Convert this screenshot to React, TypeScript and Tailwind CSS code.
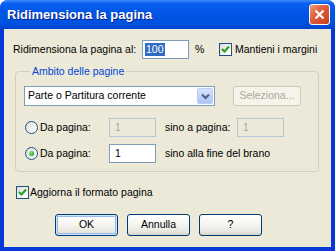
import React from "react";

const font = { fontFamily: '"Liberation Sans", Arial, sans-serif' };

function Check() {
  return (
    <span className="flex h-[13px] w-[13px] shrink-0 items-center justify-center border border-[#1C5180] bg-[linear-gradient(135deg,#DCDCD7_0%,#F4F4F0_60%,#FFFFFF_100%)]">
      <svg width="9" height="9" viewBox="0 0 9 9">
        <path d="M1 4 L3.5 6.5 L8 1.5" stroke="#21A121" strokeWidth="2" fill="none" />
      </svg>
    </span>
  );
}

function Radio({ on }: { on?: boolean }) {
  return (
    <span className="flex h-[13px] w-[13px] shrink-0 items-center justify-center rounded-full border border-[#1C5180] bg-[linear-gradient(135deg,#DCDCD7_0%,#F4F4F0_60%,#FFFFFF_100%)]">
      {on && <span className="h-[5px] w-[5px] rounded-full bg-[radial-gradient(circle_at_35%_35%,#8CE88A_0%,#21A121_80%)]" />}
    </span>
  );
}

function Btn({ label, def }: { label: string; def?: boolean }) {
  return (
    <div
      className={
        "flex h-[22px] w-[63px] items-center justify-center rounded-[3px] border border-[#003C74] bg-[linear-gradient(180deg,#FFFFFF_0%,#F4F4F0_50%,#E6E5DE_85%,#D6D0C5_100%)] text-black " +
        (def ? "shadow-[inset_0_0_0_1px_#CEE7FF,inset_0_0_0_2px_#98B8EA]" : "")
      }
    >
      {label}
    </div>
  );
}

export default function App() {
  return (
    <div style={font} className="flex h-[251px] w-[335px] flex-col overflow-hidden whitespace-nowrap rounded-t-[8px] bg-[#0838D7]">
      {/* title bar */}
      <div className="flex h-[29px] shrink-0 items-center justify-between bg-[linear-gradient(180deg,#3D8DF7_0%,#0A5FF0_12%,#0055E5_45%,#0052E0_80%,#0043CF_100%)] pl-[7px] pr-[5px]">
        <span className="text-[13px] font-bold text-white [text-shadow:1px_1px_0_#0A1E8C]">Ridimensiona la pagina</span>
        <div className="flex h-[21px] w-[21px] items-center justify-center rounded-[3px] border border-white bg-[linear-gradient(135deg,#F09878_0%,#E0603F_40%,#C7401F_100%)]">
          <svg width="11" height="11" viewBox="0 0 11 11">
            <path d="M1.5 1.5 L9.5 9.5 M9.5 1.5 L1.5 9.5" stroke="white" strokeWidth="2.2" />
          </svg>
        </div>
      </div>
      {/* body */}
      <div className="mx-[4px] mb-[4px] flex flex-1 flex-col bg-[#ECE9D8] pl-[9px] text-[10.5px] text-black">
        {/* row 1 */}
        <div className="mt-[11px] flex h-[19px] items-center">
          <span className="w-[129px] shrink-0">Ridimensiona la pagina al:</span>
          <div className="flex h-[19px] w-[47px] shrink-0 items-center border border-[#7F9DB9] bg-white pl-[2px]">
            <span className="bg-[#316AC5] px-[1px] leading-[13px] text-white">100</span>
          </div>
          <span className="w-[30px] shrink-0 pl-[6px]">%</span>
          <Check />
          <span className="ml-[3px]">Mantieni i margini</span>
        </div>
        {/* group */}
        <fieldset className="ml-[2px] mt-[6px] w-[304px] rounded-[4px] border border-[#D0D0BF] pb-[8px] pl-[8px]">
          <legend className="ml-[6px] px-[2px] leading-[13px] text-[#0046D5]">Ambito delle pagine</legend>
          <div className="mt-[8px] flex items-center">
            <div className="flex h-[20px] w-[191px] items-center justify-between border border-[#7F9DB9] bg-white pl-[3px] pr-[1px]">
              <span>Parte o Partitura corrente</span>
              <div className="flex h-[16px] w-[16px] items-center justify-center rounded-[2px] border border-[#B9CBF5] bg-[linear-gradient(180deg,#D8E4FC_0%,#C1D3FB_50%,#AFC5F5_100%)]">
                <svg width="9" height="7" viewBox="0 0 9 7">
                  <path d="M1 1.5 L4.5 5 L8 1.5" stroke="#4D6185" strokeWidth="2" fill="none" />
                </svg>
              </div>
            </div>
            <div className="ml-[18px] flex h-[20px] w-[68px] items-center justify-center rounded-[3px] border border-[#C9C7BA] bg-[#F5F4EA] text-[#ACA899]">
              Seleziona...
            </div>
          </div>
          <div className="mt-[12px] flex h-[19px] items-center">
            <span className="ml-[1px]"><Radio /></span>
            <span className="ml-[2px] w-[69px] shrink-0">Da pagina:</span>
            <div className="flex h-[19px] w-[47px] shrink-0 items-center border border-[#B5C6D9] bg-[#ECE9D8] pl-[5px] text-[#ACA899]">1</div>
            <span className="ml-[9px] w-[72px] shrink-0">sino a pagina:</span>
            <div className="flex h-[19px] w-[47px] shrink-0 items-center border border-[#B5C6D9] bg-[#ECE9D8] pl-[5px] text-[#ACA899]">1</div>
          </div>
          <div className="mt-[7px] flex h-[19px] items-center">
            <span className="ml-[1px]"><Radio on /></span>
            <span className="ml-[2px] w-[69px] shrink-0">Da pagina:</span>
            <div className="flex h-[19px] w-[47px] shrink-0 items-center border border-[#7F9DB9] bg-white pl-[5px]">1</div>
            <span className="ml-[9px]">sino alla fine del brano</span>
          </div>
        </fieldset>
        {/* checkbox */}
        <div className="ml-[3px] mt-[14px] flex h-[13px] items-center">
          <Check />
          <span className="ml-[1px]">Aggiorna il formato pagina</span>
        </div>
        {/* buttons */}
        <div className="ml-[42px] mt-[15px] flex gap-[9px]">
          <Btn label="OK" def />
          <Btn label="Annulla" />
          <Btn label="?" />
        </div>
      </div>
    </div>
  );
}
